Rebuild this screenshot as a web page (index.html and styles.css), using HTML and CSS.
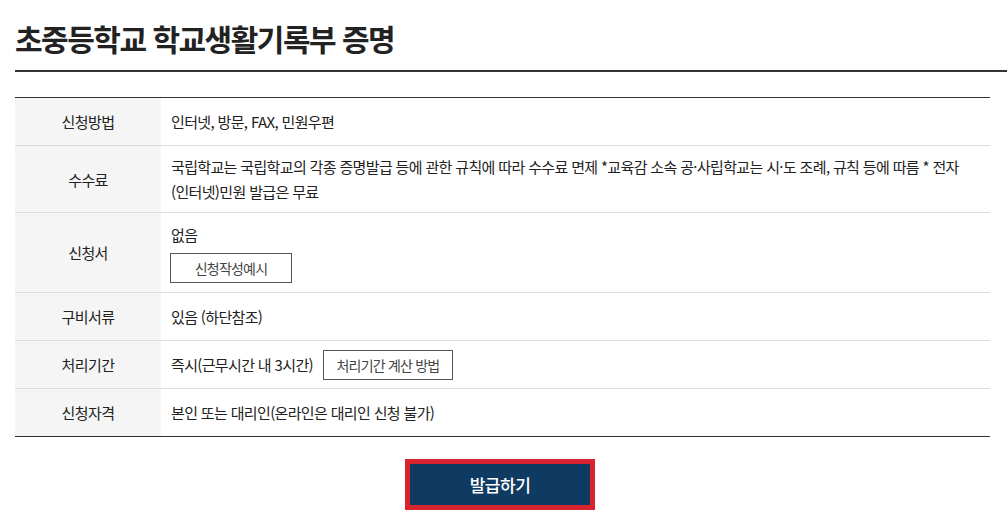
FILE: index.html
```html
<!DOCTYPE html>
<html lang="ko">
<head>
<meta charset="utf-8">
<title>초중등학교 학교생활기록부 증명</title>
<link rel="stylesheet" href="styles.css">
</head>
<body>
<div class="page">
  <h1 class="title">초중등학교 학교생활기록부 증명</h1>
  <div class="info">
    <div class="row">
      <div class="th">신청방법</div>
      <div class="td">인터넷, 방문, FAX, 민원우편</div>
    </div>
    <div class="row">
      <div class="th">수수료</div>
      <div class="td">국립학교는 국립학교의 각종 증명발급 등에 관한 규칙에 따라 수수료 면제 *교육감 소속 공·사립학교는 시·도 조례, 규칙 등에 따름 * 전자(인터넷)민원 발급은 무료</div>
    </div>
    <div class="row">
      <div class="th">신청서</div>
      <div class="td stack">
        <span>없음</span>
        <button class="sbtn w1" type="button">신청작성예시</button>
      </div>
    </div>
    <div class="row">
      <div class="th">구비서류</div>
      <div class="td">있음 (하단참조)</div>
    </div>
    <div class="row">
      <div class="th">처리기간</div>
      <div class="td inline">
        <span>즉시(근무시간 내 3시간)</span>
        <button class="sbtn w2" type="button">처리기간 계산 방법</button>
      </div>
    </div>
    <div class="row last">
      <div class="th">신청자격</div>
      <div class="td">본인 또는 대리인(온라인은 대리인 신청 불가)</div>
    </div>
  </div>
  <div class="actions">
    <button class="issue" type="button">발급하기</button>
  </div>
</div>
</body>
</html>
```
FILE: styles.css
```css
html, body {
  margin: 0;
  padding: 0;
  background: #fff;
}
body {
  font-family: "Noto Sans CJK KR", "Noto Sans", sans-serif;
  color: #222;
  overflow: hidden;
}
.page {
  padding-left: 15px;
}
.title {
  margin: 0;
  padding-top: 17px;
  height: 72px;
  box-sizing: border-box;
  font-size: 30px;
  line-height: 42px;
  font-weight: 700;
  letter-spacing: -1.5px;
  color: #222;
  border-bottom: 2px solid #333;
}
.info {
  margin-top: 25px;
  margin-right: 17px;
  border-top: 1px solid #333;
  border-bottom: 1px solid #333;
}
.row {
  display: grid;
  grid-template-columns: 146px 1fr;
  border-bottom: 1px solid #ddd;
  min-height: 47px;
}
.row.last {
  border-bottom: 0;
}
.th {
  background: #f5f5f5;
  display: flex;
  align-items: center;
  justify-content: center;
  font-size: 15px;
  letter-spacing: -0.6px;
  color: #222;
}
.td {
  padding: 8px 10px;
  display: flex;
  align-items: center;
  font-size: 15px;
  line-height: 25px;
  letter-spacing: -0.65px;
  color: #222;
  word-break: keep-all;
}
.td.stack {
  padding-top: 9px;
  padding-bottom: 9px;
  flex-direction: column;
  align-items: flex-start;
  justify-content: center;
  gap: 6px;
}
.td.inline {
  gap: 10px;
}
.sbtn {
  height: 30px;
  border: 1px solid #555;
  background: #fff;
  color: #444;
  font-family: "Noto Sans CJK KR", "Noto Sans", sans-serif;
  font-size: 14px;
  letter-spacing: -0.8px;
  padding: 0;
  margin: 0;
}
.sbtn.w1 { width: 122px; margin-left: -1px; }
.sbtn.w2 { width: 130px; }
.actions {
  display: flex;
  justify-content: center;
  padding-top: 22px;
  margin-right: 17px;
}
.issue {
  width: 190px;
  height: 51px;
  background: #0f3a62;
  border: 5px solid #d9232e;
  color: #fff;
  font-family: "Noto Sans CJK KR", "Noto Sans", sans-serif;
  font-size: 17px;
  font-weight: 500;
  letter-spacing: -0.5px;
  padding: 0;
  margin: 0 0 0 -5px;
}
```
